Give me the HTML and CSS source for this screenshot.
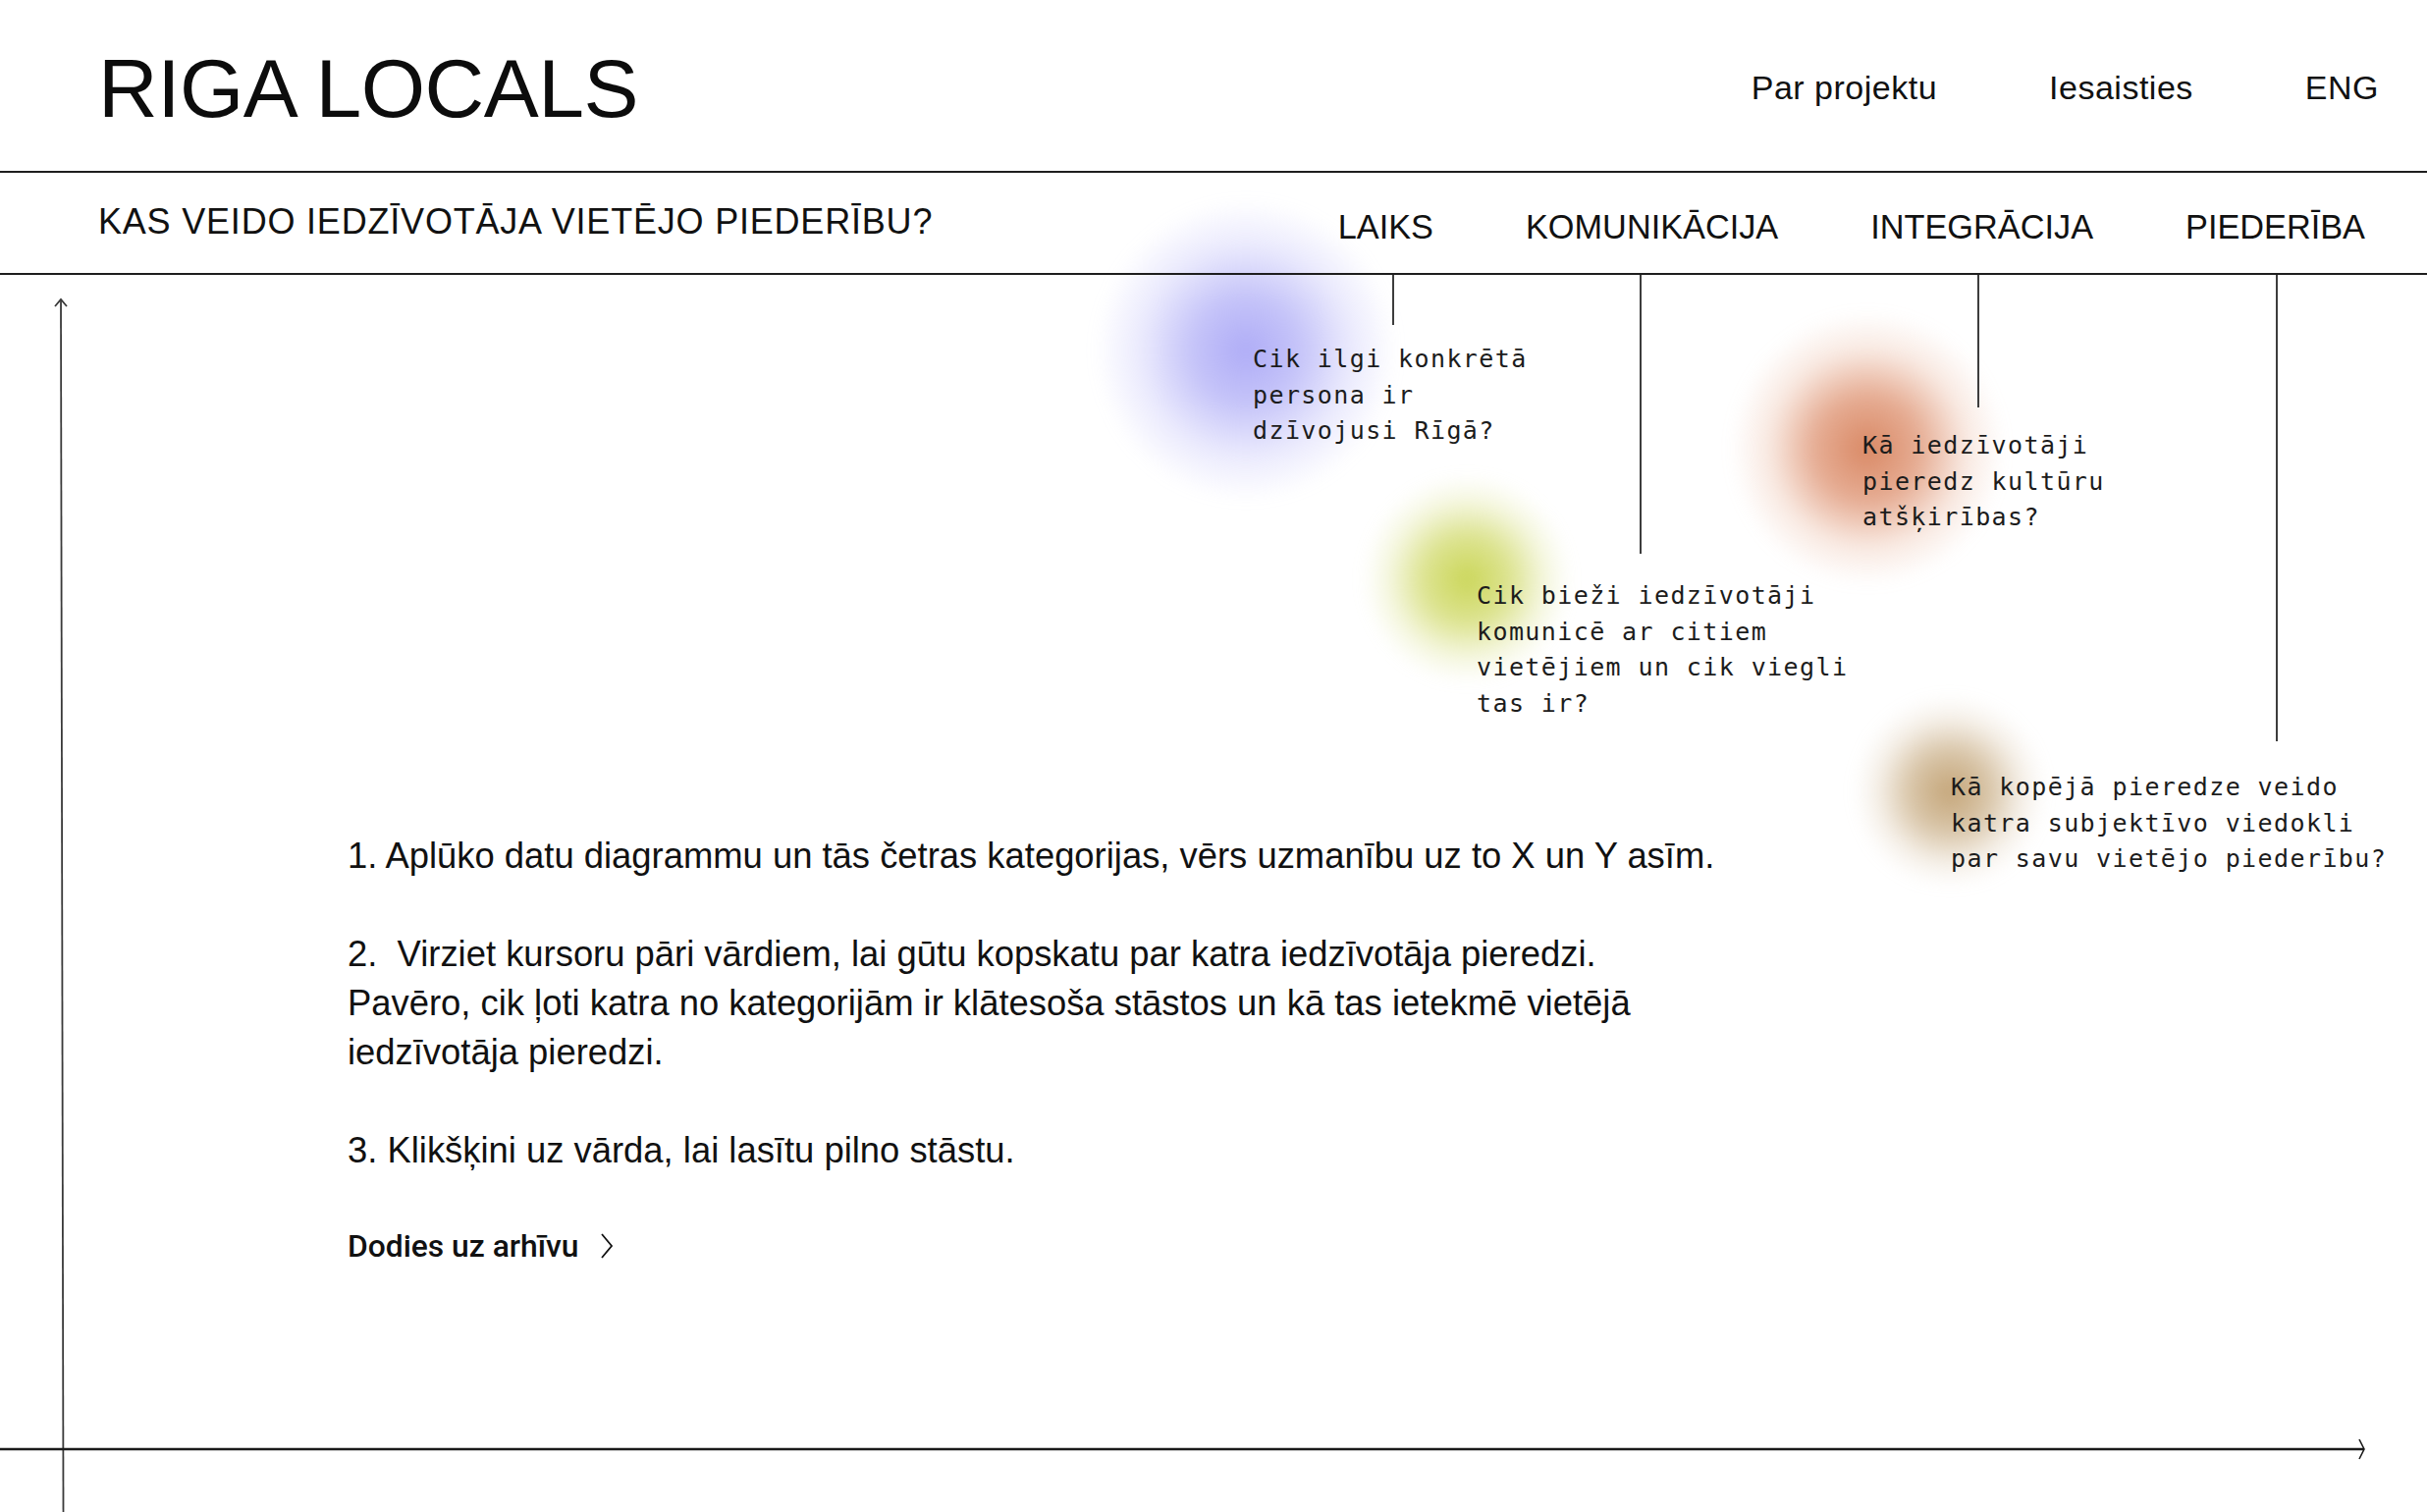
FILE: index.html
```html
<!DOCTYPE html>
<html lang="lv">
<head>
<meta charset="utf-8">
<title>Riga Locals</title>
<link rel="stylesheet" href="styles.css">
</head>
<body>
<header class="topbar">
  <div class="logo">RIGA LOCALS</div>
  <nav class="nav">
    <a href="#">Par projektu</a>
    <a href="#">Iesaisties</a>
    <a href="#">ENG</a>
  </nav>
</header>
<div class="subbar">
  <h1 class="title">KAS VEIDO IEDZĪVOTĀJA VIETĒJO PIEDERĪBU?</h1>
  <ul class="cats">
    <li>LAIKS</li>
    <li>KOMUNIKĀCIJA</li>
    <li>INTEGRĀCIJA</li>
    <li>PIEDERĪBA</li>
  </ul>
</div>
<main class="chart">
  <div class="blob blob-blue"></div>
  <div class="blob blob-green"></div>
  <div class="blob blob-orange"></div>
  <div class="blob blob-brown"></div>

  <svg class="axes" width="2472" height="1260" viewBox="0 0 2472 1260">
    <line x1="62" y1="25" x2="64.5" y2="1260" class="ax-y"/>
    <polyline points="56,32 62,25 68,32" class="ax-y"/>
    <line x1="0" y1="1196" x2="2408" y2="1196" class="ax-x"/>
    <polyline points="2403,1186 2408,1196 2403,1206" class="ax-x-head"/>
  </svg>

  <span class="stem stem-laiks"></span>
  <span class="stem stem-kom"></span>
  <span class="stem stem-int"></span>
  <span class="stem stem-pied"></span>

  <p class="q q-laiks">Cik ilgi konkrētā<br>persona ir<br>dzīvojusi Rīgā?</p>
  <p class="q q-kom">Cik bieži iedzīvotāji<br>komunicē ar citiem<br>vietējiem un cik viegli<br>tas ir?</p>
  <p class="q q-int">Kā iedzīvotāji<br>pieredz kultūru<br>atšķirības?</p>
  <p class="q q-pied">Kā kopējā pieredze veido<br>katra subjektīvo viedokli<br>par savu vietējo piederību?</p>

  <section class="intro">
    <p>1. Aplūko datu diagrammu un tās četras kategorijas, vērs uzmanību uz to X un Y asīm.</p>
    <p>2.&nbsp; Virziet kursoru pāri vārdiem, lai gūtu kopskatu par katra iedzīvotāja pieredzi.<br>Pavēro, cik ļoti katra no kategorijām ir klātesoša stāstos un kā tas ietekmē vietējā<br>iedzīvotāja pieredzi.</p>
    <p>3. Klikšķini uz vārda, lai lasītu pilno stāstu.</p>
    <a class="archive" href="#">Dodies uz arhīvu
      <svg class="chev" width="16" height="28" viewBox="0 0 16 28"><polyline points="3,2 13,14 3,26"/></svg>
    </a>
  </section>
</main>
</body>
</html>
```

FILE: styles.css
```css
* { box-sizing: border-box; }
html, body { margin: 0; padding: 0; }
body {
  width: 2472px;
  height: 1540px;
  overflow: hidden;
  background: #fff;
  color: #111;
  font-family: "Liberation Sans", Arial, sans-serif;
}
a { color: inherit; text-decoration: none; }

.topbar {
  height: 176px;
  border-bottom: 2px solid #1e1e1e;
  display: flex;
  justify-content: space-between;
  align-items: flex-start;
  padding: 0 49px 0 100px;
}
.logo {
  margin-top: 48px;
  font-size: 84px;
  line-height: 84px;
  letter-spacing: -0.5px;
  color: #0c0c0c;
}
.nav {
  margin-top: 72px;
  display: flex;
  gap: 114px;
  font-size: 34px;
  line-height: 34px;
  letter-spacing: 0.5px;
}

.subbar {
  position: relative;
  z-index: 2;
  height: 104px;
  border-bottom: 2px solid #1e1e1e;
  display: flex;
  justify-content: space-between;
  align-items: flex-start;
  padding: 0 63px 0 100px;
}
.title {
  margin: 32px 0 0;
  font-size: 36px;
  line-height: 36px;
  font-weight: 400;
  letter-spacing: 0.8px;
}
.cats {
  list-style: none;
  margin: 38px 0 0;
  padding: 0;
  display: flex;
  gap: 94px;
  font-size: 34.3px;
  line-height: 35px;
}

.chart {
  position: relative;
  height: 1260px;
}

.blob {
  position: absolute;
  border-radius: 50%;
  z-index: 0;
  filter: blur(8px);
}
.blob-blue {
  left: 1116px; top: -76px; width: 306px; height: 306px;
  background: radial-gradient(closest-side, rgba(168,165,246,0.92) 0%, rgba(172,170,246,0.7) 35%, rgba(182,180,248,0.28) 70%, rgba(255,255,255,0) 100%);
}
.blob-green {
  left: 1388px; top: 204px; width: 212px; height: 212px;
  background: radial-gradient(closest-side, rgba(200,212,80,0.95) 0%, rgba(205,215,95,0.7) 40%, rgba(215,222,130,0.25) 75%, rgba(255,255,255,0) 100%);
}
.blob-orange {
  left: 1763px; top: 38px; width: 278px; height: 278px;
  background: radial-gradient(closest-side, rgba(215,130,92,0.95) 0%, rgba(220,140,105,0.72) 38%, rgba(230,170,140,0.26) 72%, rgba(255,255,255,0) 100%);
}
.blob-brown {
  left: 1888px; top: 428px; width: 196px; height: 196px;
  background: radial-gradient(closest-side, rgba(190,155,105,0.9) 0%, rgba(195,165,120,0.65) 40%, rgba(210,185,150,0.22) 75%, rgba(255,255,255,0) 100%);
}

.axes {
  position: absolute;
  left: 0; top: 0;
  z-index: 1;
  overflow: visible;
}
.ax-y { stroke: #3a3a3a; stroke-width: 1.8; fill: none; }
.ax-x { stroke: #1a1a1a; stroke-width: 2.4; fill: none; }
.ax-x-head { stroke: #1a1a1a; stroke-width: 1.6; fill: none; }

.stem {
  position: absolute;
  top: 0;
  width: 2px;
  background: #3d3d3d;
  z-index: 1;
}
.stem-laiks { left: 1418px; height: 51px; }
.stem-kom { left: 1670px; height: 284px; }
.stem-int { left: 2014px; height: 135px; }
.stem-pied { left: 2318px; height: 475px; }

.q {
  position: absolute;
  z-index: 2;
  margin: 0;
  font-family: "DejaVu Sans Mono", "Liberation Mono", monospace;
  font-size: 25px;
  line-height: 36.5px;
  letter-spacing: 1.4px;
  color: #1c1c1c;
  white-space: nowrap;
}
.q-laiks { left: 1276px; top: 68px; }
.q-kom { left: 1504px; top: 309px; }
.q-int { left: 1897px; top: 156px; }
.q-pied { left: 1987px; top: 504px; }

.intro {
  position: relative;
  z-index: 2;
  padding: 567px 0 0 354px;
}
.intro p {
  margin: 0 0 50px;
  font-size: 36.4px;
  line-height: 50px;
  white-space: nowrap;
}
.archive {
  display: inline-flex;
  align-items: center;
  gap: 20px;
  margin-top: 2px;
  font-family: Roboto, "Liberation Sans", sans-serif;
  font-weight: 500;
  font-size: 31.8px;
  line-height: 40px;
}
.chev polyline { fill: none; stroke: #111; stroke-width: 1.8; }
```
